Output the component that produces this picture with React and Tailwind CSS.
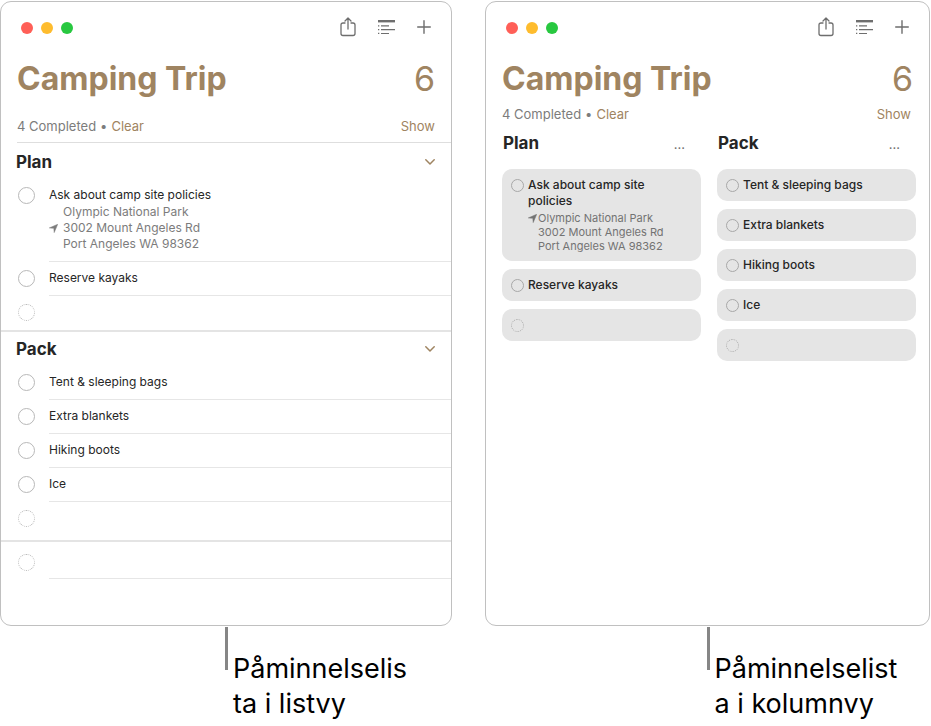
import clsx from 'clsx';

const sections = [
  {
    title: 'Plan',
    items: [
      {
        title: 'Ask about camp site policies',
        location: ['Olympic National Park', '3002 Mount Angeles Rd', 'Port Angeles WA 98362'],
      },
      { title: 'Reserve kayaks' },
    ],
  },
  {
    title: 'Pack',
    items: [
      { title: 'Tent & sleeping bags' },
      { title: 'Extra blankets' },
      { title: 'Hiking boots' },
      { title: 'Ice' },
    ],
  },
];

function ShareIcon() {
  return (
    <svg width="16" height="20" viewBox="0 0 16 20" fill="none" stroke="currentColor" strokeWidth="1.3" strokeLinecap="round" strokeLinejoin="round">
      <path d="M5 6H3Q1 6 1 8V16.5Q1 18.5 3 18.5H13Q15 18.5 15 16.5V8Q15 6 13 6H11" />
      <path d="M8 12V1.2M5 4L8 1L11 4" />
    </svg>
  );
}

function ListIcon() {
  return (
    <svg width="17" height="15" viewBox="0 0 17 15" fill="currentColor">
      <path d="M0 0H17V2.4H0Z" />
      <path d="M0 5.2H1.3V6.5H0ZM3 5.3H11V6.4H3Z" />
      <path d="M0 9H1.3V10.3H0ZM3 9.1H17V10.2H3Z" />
      <path d="M0 12.8H1.3V14.1H0ZM3 12.9H11V14H3Z" />
    </svg>
  );
}

function PlusIcon() {
  return (
    <svg width="14" height="14" viewBox="0 0 14 14" fill="none" stroke="currentColor" strokeWidth="1.4" strokeLinecap="round">
      <path d="M7 0.7V13.3M0.7 7H13.3" />
    </svg>
  );
}

function ChevronIcon() {
  return (
    <svg width="10" height="6" viewBox="0 0 10 6" fill="none" stroke="currentColor" strokeWidth="1.5" strokeLinecap="round" strokeLinejoin="round">
      <path d="M0.8 0.8L5 5L9.2 0.8" />
    </svg>
  );
}

function ArrowIcon() {
  return (
    <svg width="9" height="9" viewBox="0 0 9 9" fill="currentColor" stroke="currentColor" strokeWidth="0.5" strokeLinejoin="round" className="shrink-0">
      <path d="M8.7 0.3L5.2 8.6L4.8 4.3L0.3 3.9Z" />
    </svg>
  );
}

function Check({ label, small, empty }) {
  return (
    <span className="flex h-4 shrink-0 items-center">
      <input
        type="checkbox"
        aria-label={label}
        className={clsx(
          'appearance-none rounded-full border',
          small ? 'size-[13px]' : 'size-[17px]',
          empty ? 'border-dotted' : 'border-solid',
          small ? 'border-[#a8a8a8]' : 'border-[#b8b8b8]'
        )}
      />
    </span>
  );
}

function Toolbar() {
  return (
    <div className="flex h-[52px] items-center justify-between px-5">
      <div className="flex gap-2">
        <span className="size-3 rounded-full bg-[#ff5f57]" />
        <span className="size-3 rounded-full bg-[#febc2e]" />
        <span className="size-3 rounded-full bg-[#28c840]" />
      </div>
      <div className="flex items-center gap-[22px] pb-[2px] text-[#6e6e6e]">
        <button type="button" aria-label="Share"><ShareIcon /></button>
        <button type="button" aria-label="View options"><ListIcon /></button>
        <button type="button" aria-label="Add reminder"><PlusIcon /></button>
      </div>
    </div>
  );
}

function Heading() {
  return (
    <div className="flex h-[50px] items-center justify-between px-4 leading-[50px] text-[#9f8461]">
      <h1 className="text-[32px] font-bold">Camping Trip</h1>
      <span className="text-[34px]">6</span>
    </div>
  );
}

function Status() {
  return (
    <div className="flex justify-between text-[13px] leading-5 text-[#9f8461]">
      <p className="flex gap-1 text-[#7c7c7c]">
        <span>4 Completed</span>
        <span>•</span>
        <button type="button" className="text-[#9f8461]">Clear</button>
      </p>
      <button type="button">Show</button>
    </div>
  );
}

function Window({ caption, children }) {
  return (
    <figure className="flex flex-col">
      <div className="flex-1 rounded-[11px] border border-[#c0c0c0] bg-white">
        <Toolbar />
        <Heading />
        {children}
      </div>
      <figcaption className="ml-[calc(50%-1px)] flex gap-[5px] pt-px text-[27px] leading-[35px] text-black">
        <span className="h-[43px] w-[3px] bg-[#868686]" />
        <span className="pt-6 whitespace-nowrap">
          {caption[0]}
          <br />
          {caption[1]}
        </span>
      </figcaption>
    </figure>
  );
}

function Row({ item }) {
  return (
    <li className="flex gap-[14px] pl-[17px]">
      <div className="pt-2">
        <Check label={item ? item.title : 'New reminder'} empty={!item} />
      </div>
      <div className={clsx('flex-1 border-b pt-2 pb-[9px]', item ? 'border-[#e6e6e6]' : 'border-transparent')}>
        <p className="h-4">{item?.title}</p>
        {item?.location && (
          <div className="mt-px flex items-center gap-[5px] text-[#7c7c7c]">
            <ArrowIcon />
            <p>
              {item.location.map((line) => (
                <span key={line} className="block">{line}</span>
              ))}
            </p>
          </div>
        )}
      </div>
    </li>
  );
}

function ListView() {
  return (
    <>
      <div className="ml-4 border-b border-[#dedede] pt-3 pr-4 pb-[6px]">
        <Status />
      </div>
      <div className="pt-[2px] pb-[46px] text-[12px] leading-4 text-[#262626]">
        {sections.map((section) => (
          <section key={section.title} className="border-b-2 border-[#e4e4e4] last-of-type:pb-1">
            <div className="flex h-[34px] items-center justify-between pr-4 pl-[15px]">
              <h2 className="text-[17px] font-bold">{section.title}</h2>
              <button type="button" aria-label={`Collapse ${section.title}`} className="text-[#9f8461]">
                <ChevronIcon />
              </button>
            </div>
            <ul>
              {section.items.map((item) => (
                <Row key={item.title} item={item} />
              ))}
              <Row />
            </ul>
          </section>
        ))}
        <div className="flex gap-[14px] pl-[17px]">
          <div className="pt-3">
            <Check label="New reminder" empty />
          </div>
          <div className="flex-1 border-b border-[#e6e6e6] pt-3 pb-6" />
        </div>
      </div>
    </>
  );
}

function Card({ item }) {
  return (
    <li className="flex gap-1 rounded-[10px] bg-[#e5e5e5] py-2 pr-9 pl-[9px]">
      <Check small label={item ? item.title : 'New reminder'} empty={!item} />
      <div>
        <p className="font-medium">{item?.title}</p>
        {item?.location && (
          <div className="mt-[2px] flex gap-px text-[11px] leading-[14px] text-[#737373]">
            <span className="flex h-[14px] items-center"><ArrowIcon /></span>
            <p className="whitespace-nowrap">
              {item.location.map((line) => (
                <span key={line} className="block">{line}</span>
              ))}
            </p>
          </div>
        )}
      </div>
    </li>
  );
}

function ColumnView() {
  return (
    <>
      <div className="pr-[18px] pl-4">
        <Status />
      </div>
      <div className="grid grid-cols-2 gap-4 pt-[9px] pr-[13px] pl-4 text-[12px] leading-4 text-[#262626]">
        {sections.map((section) => (
          <section key={section.title}>
            <div className="flex items-baseline justify-between pr-4 pb-[15px] pl-px text-[13px] leading-5">
              <h2 className="text-[17px] font-bold">{section.title}</h2>
              <button type="button" aria-label={`${section.title} options`} className="text-[#6e6e6e]">...</button>
            </div>
            <ul className="flex flex-col gap-2">
              {section.items.map((item) => (
                <Card key={item.title} item={item} />
              ))}
              <Card />
            </ul>
          </section>
        ))}
      </div>
    </>
  );
}

export default function App() {
  return (
    <main className="grid grid-cols-[452fr_445fr] gap-[33px] bg-white pt-px pr-px font-['Inter',sans-serif]">
      <Window caption={['Påminnelselis', 'ta i listvy']}>
        <ListView />
      </Window>
      <Window caption={['Påminnelselist', 'a i kolumnvy']}>
        <ColumnView />
      </Window>
    </main>
  );
}
